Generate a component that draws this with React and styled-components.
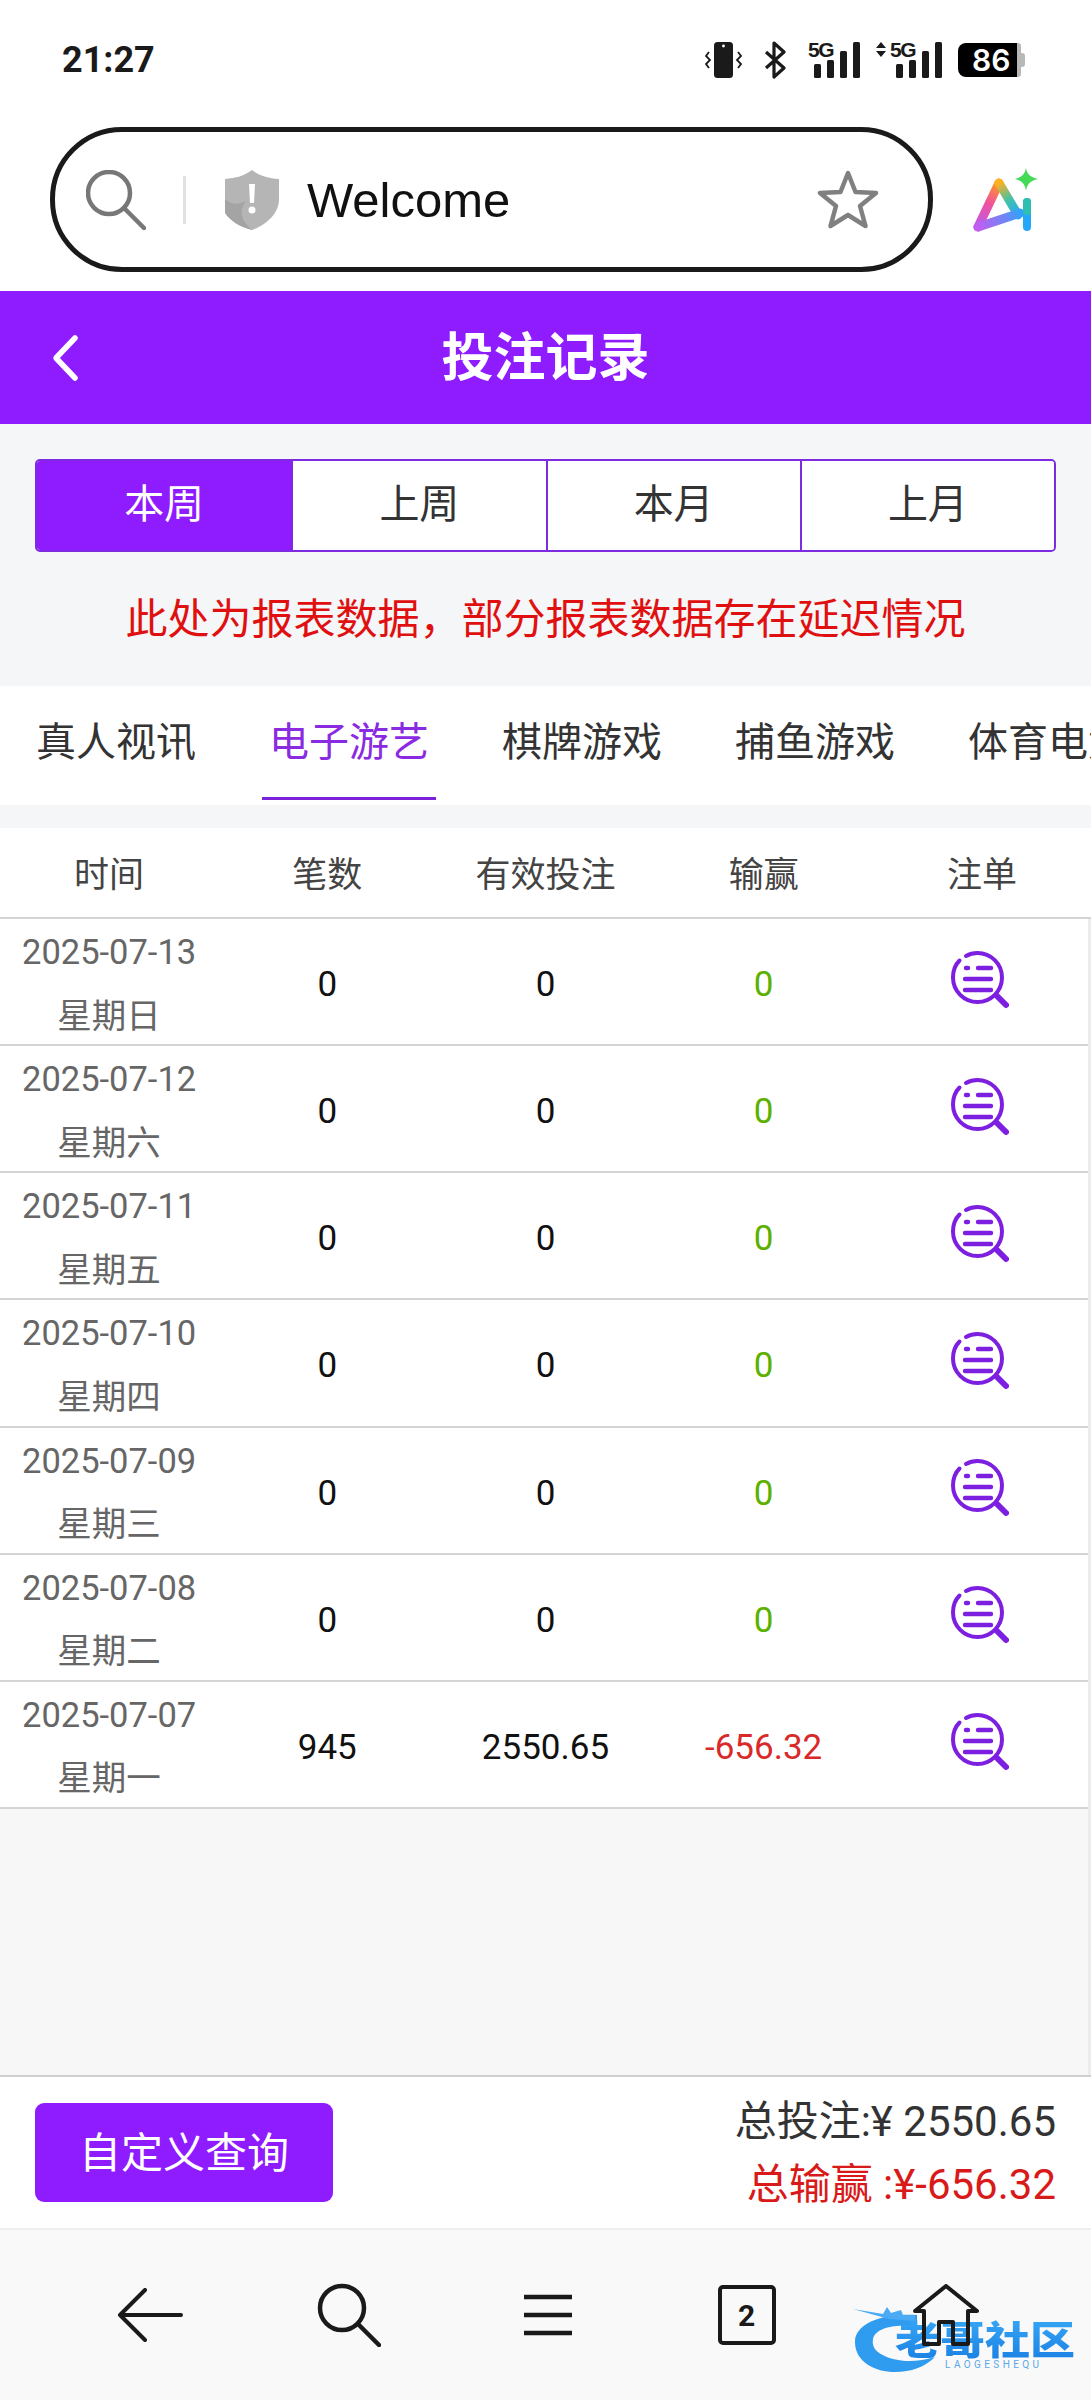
import React from "react";
import styled, { createGlobalStyle } from "styled-components";

const PURPLE = "#8f1bff";
const SANS = `Roboto, "Noto Sans CJK SC", sans-serif`;

const GlobalStyle = createGlobalStyle`
  html, body {
    margin: 0;
    padding: 0;
    background: #fff;
  }
  * {
    box-sizing: border-box;
  }
`;

const rows = [
  { date: "2025-07-13", day: "星期日", count: "0", valid: "0", win: "0" },
  { date: "2025-07-12", day: "星期六", count: "0", valid: "0", win: "0" },
  { date: "2025-07-11", day: "星期五", count: "0", valid: "0", win: "0" },
  { date: "2025-07-10", day: "星期四", count: "0", valid: "0", win: "0" },
  { date: "2025-07-09", day: "星期三", count: "0", valid: "0", win: "0" },
  { date: "2025-07-08", day: "星期二", count: "0", valid: "0", win: "0" },
  { date: "2025-07-07", day: "星期一", count: "945", valid: "2550.65", win: "-656.32" },
];

function SignalBars() {
  return (
    <svg width="52" height="38" viewBox="0 0 52 38">
      <rect x="6" y="23" width="7" height="14" rx="1.5" fill="#1a1a1a" />
      <rect x="19" y="19" width="7" height="18" rx="1.5" fill="#1a1a1a" />
      <rect x="32" y="10" width="7" height="27" rx="1.5" fill="#1a1a1a" />
      <rect x="45" y="1" width="7" height="36" rx="1.5" fill="#1a1a1a" />
    </svg>
  );
}

function StatusIcons() {
  return (
    <StatusGroup>
      <svg width="37" height="38" viewBox="0 0 37 38">
        <rect x="9" y="1" width="19" height="36" rx="3.5" fill="#1a1a1a" />
        <circle cx="18.5" cy="5" r="1.4" fill="#fff" />
        <path d="M4 11 L1 15 L5 19 L1 23 L4 27" fill="none" stroke="#1a1a1a" strokeWidth="1.8" />
        <path d="M33 11 L36 15 L32 19 L36 23 L33 27" fill="none" stroke="#1a1a1a" strokeWidth="1.8" />
      </svg>
      <BluetoothIcon width="22" height="38" viewBox="0 0 22 38">
        <path d="M2 11 L20 27 L10 36 L10 2 L20 11 L2 27" fill="none" stroke="#1a1a1a" strokeWidth="3.2" strokeLinejoin="round" />
      </BluetoothIcon>
      <Signal $gap={22}>
        <SignalLabel>5G</SignalLabel>
        <SignalBars />
      </Signal>
      <DataArrows width="12" height="16" viewBox="0 0 12 16">
        <path d="M6 0 L11 6 L1 6 Z M6 15 L11 9 L1 9 Z" fill="#1a1a1a" />
      </DataArrows>
      <Signal $gap={3}>
        <SignalLabel>5G</SignalLabel>
        <SignalBars />
      </Signal>
      <Battery>
        <BatteryLevel>86</BatteryLevel>
        <BatteryCap />
      </Battery>
    </StatusGroup>
  );
}

function ShieldIcon() {
  return (
    <svg width="56" height="62" viewBox="0 0 56 62">
      <path d="M28 1 C36 7 44 9 55 10 L55 30 C55 45 42 56 28 61 C14 56 1 45 1 30 L1 10 C12 9 20 7 28 1 Z" fill="#b5b5b5" />
      <path d="M1 30 L1 44 C6 52 16 58 28 61 C18 52 14 44 22 32 C14 36 8 36 1 30 Z" fill="#a4a4a4" />
      <path d="M25 15 H31 L30 34 H26 Z" fill="#fff" />
      <circle cx="28" cy="41" r="3.5" fill="#fff" />
    </svg>
  );
}

function AiLogo() {
  return (
    <AiLogoSvg width="66" height="64" viewBox="0 0 66 64">
      <defs>
        <linearGradient id="aiLeft" gradientUnits="userSpaceOnUse" x1="26" y1="15" x2="4" y2="60">
          <stop offset="0" stopColor="#ff9a1f" />
          <stop offset="0.45" stopColor="#f0529c" />
          <stop offset="1" stopColor="#b85cf2" />
        </linearGradient>
        <linearGradient id="aiBase" gradientUnits="userSpaceOnUse" x1="4" y1="60" x2="50" y2="42">
          <stop offset="0" stopColor="#c45cf0" />
          <stop offset="0.6" stopColor="#6f86f5" />
          <stop offset="1" stopColor="#25a8fa" />
        </linearGradient>
        <linearGradient id="aiRight" gradientUnits="userSpaceOnUse" x1="26" y1="15" x2="46" y2="48">
          <stop offset="0" stopColor="#ffb020" />
          <stop offset="0.5" stopColor="#44c2a8" />
          <stop offset="1" stopColor="#25a8fa" />
        </linearGradient>
      </defs>
      <path d="M5 59 L26 15" stroke="url(#aiLeft)" strokeWidth="9" strokeLinecap="round" fill="none" />
      <path d="M26 15 L45 47" stroke="url(#aiRight)" strokeWidth="9" strokeLinecap="round" fill="none" />
      <path d="M5 59 L47 45" stroke="url(#aiBase)" strokeWidth="9" strokeLinecap="round" fill="none" />
      <path d="M54 34 V59" stroke="#25a8fa" strokeWidth="8" strokeLinecap="round" fill="none" />
      <path d="M54 34 V43" stroke="#2fbfb0" strokeWidth="8" strokeLinecap="round" fill="none" />
      <path d="M53 0 C54 6 57 9 65 11 C57 13 54 16 53 23 C52 16 49 13 42 11 C49 9 52 6 53 0 Z" fill="#45d958" />
    </AiLogoSvg>
  );
}

function RecordIcon() {
  return (
    <svg width="58" height="58" viewBox="0 0 58 58" fill="none" stroke="#7d1fe0" strokeLinecap="round">
      <path d="M8.5 9.5 C4.5 13.5 2 19.5 2 26.5 C2 40 13 51 26.5 51 C40 51 51 40 51 26.5 C51 13 40 2 26.5 2 C22 2 18.5 3 15 5" strokeWidth="4" />
      <path d="M46 45 L55 54" strokeWidth="6" />
      <path d="M15 17 H17 M27 17 H40 M14 28 H40 M14 39 H40" strokeWidth="4.4" />
    </svg>
  );
}

function NavIcons() {
  return (
    <BottomNav>
      <NavSlot>
        <svg width="66" height="54" viewBox="0 0 66 54" fill="none" stroke="#1a1a1a" strokeWidth="4" strokeLinecap="round" strokeLinejoin="round">
          <path d="M28 2 L3 27 L28 52 M3 27 H64" />
        </svg>
      </NavSlot>
      <NavSlot>
        <svg width="64" height="64" viewBox="0 0 64 64" fill="none" stroke="#1a1a1a" strokeWidth="4.5" strokeLinecap="round">
          <circle cx="25" cy="25" r="22" />
          <path d="M41 41 L62 62" />
        </svg>
      </NavSlot>
      <NavSlot>
        <svg width="48" height="42" viewBox="0 0 48 42" fill="none" stroke="#1a1a1a" strokeWidth="4.5">
          <path d="M0 3 H48 M0 21 H48 M0 39 H48" />
        </svg>
      </NavSlot>
      <NavSlot>
        <TabCount>2</TabCount>
      </NavSlot>
      <NavSlot>
        <svg width="66" height="62" viewBox="0 0 66 62" fill="none" stroke="#1a1a1a" strokeWidth="4" strokeLinejoin="round" strokeLinecap="round">
          <path d="M2 27 L33 2 L64 27 H55 V60 H40 V38 H26 V60 H11 V27 Z" />
        </svg>
      </NavSlot>
      <Watermark>
        <svg width="90" height="68" viewBox="0 0 90 68">
          <path d="M64 8 C30 6 2 16 2 35 C2 55 22 65 42 65 C58 65 72 60 82 50 C66 55 52 55 40 52 C26 48 18 42 20 32 C22 22 40 16 64 20 Z" fill="#2f9cf0" />
          <path d="M0 2 L30 7 L34 0 L38 6 L48 3 L50 8 L62 8 L62 14 L36 12 Z" fill="#4aaaf4" />
        </svg>
        <WatermarkName>老哥社区</WatermarkName>
        <WatermarkPinyin>LAOGESHEQU</WatermarkPinyin>
      </Watermark>
    </BottomNav>
  );
}

export default function App() {
  return (
    <Page>
      <GlobalStyle />
      <StatusBar>
        <Clock>21:27</Clock>
        <StatusIcons />
      </StatusBar>

      <BrowserBar>
        <AddressBox>
          <svg width="60" height="60" viewBox="0 0 60 60" fill="none" stroke="#777" strokeWidth="4.5" strokeLinecap="round">
            <circle cx="23" cy="23" r="21" />
            <path d="M38 38 L58 58" />
          </svg>
          <AddressDivider />
          <ShieldIcon />
          <AddressText>Welcome</AddressText>
          <StarIcon width="62" height="60" viewBox="0 0 62 60" fill="none" stroke="#808080" strokeWidth="4.5" strokeLinejoin="round">
            <path d="M31 3 L38.5 22 L59 23 L43 36 L48.5 56 L31 45 L13.5 56 L19 36 L3 23 L23.5 22 Z" />
          </StarIcon>
        </AddressBox>
        <AiLogo />
      </BrowserBar>

      <Header>
        <BackChevron>
          <svg width="30" height="48" viewBox="0 0 30 48" fill="none" stroke="#fff" strokeWidth="5.5" strokeLinecap="round" strokeLinejoin="round">
            <path d="M25 4 L6 24 L25 44" />
          </svg>
        </BackChevron>
        投注记录
      </Header>

      <FilterArea>
        <Segments>
          <Segment $active>本周</Segment>
          <Segment>上周</Segment>
          <Segment>本月</Segment>
          <Segment>上月</Segment>
        </Segments>
        <Notice>此处为报表数据，部分报表数据存在延迟情况</Notice>
      </FilterArea>

      <Tabs>
        <Tab>真人视讯</Tab>
        <Tab $active>电子游艺</Tab>
        <Tab>棋牌游戏</Tab>
        <Tab>捕鱼游戏</Tab>
        <Tab>体育电竞</Tab>
      </Tabs>

      <HeadRow>
        <span>时间</span>
        <span>笔数</span>
        <span>有效投注</span>
        <span>输赢</span>
        <span>注单</span>
      </HeadRow>
      <RowsPane>
        {rows.map((row) => (
          <Row key={row.date}>
            <DateCell>
              <div>{row.date}</div>
              <div>{row.day}</div>
            </DateCell>
            <span>{row.count}</span>
            <span>{row.valid}</span>
            <WinCell $loss={row.win !== "0"}>{row.win}</WinCell>
            <IconCell>
              <RecordIcon />
            </IconCell>
          </Row>
        ))}
      </RowsPane>

      <Summary>
        <QueryButton>自定义查询</QueryButton>
        <Totals>
          <TotalLine>总投注:¥ 2550.65</TotalLine>
          <TotalLine $red>总输赢 :¥-656.32</TotalLine>
        </Totals>
      </Summary>

      <NavIcons />
    </Page>
  );
}

const Page = styled.div`
  width: 1091px;
  height: 2400px;
  display: flex;
  flex-direction: column;
  overflow: hidden;
  background: #fff;
  font-family: ${SANS};
`;

const StatusBar = styled.div`
  height: 127px;
  padding: 41px 66px 0 62px;
  display: flex;
  justify-content: space-between;
  align-items: flex-start;
  flex-shrink: 0;
`;

const Clock = styled.div`
  font-size: 36px;
  font-weight: 700;
  line-height: 38px;
  color: #1a1a1a;
`;

const StatusGroup = styled.div`
  display: flex;
  align-items: center;
  height: 38px;
`;

const BluetoothIcon = styled.svg`
  margin-left: 22px;
`;

const DataArrows = styled.svg`
  margin-left: 15px;
  align-self: flex-start;
  margin-top: 1px;
`;

const Signal = styled.div`
  position: relative;
  width: 52px;
  height: 38px;
  margin-left: ${(p) => p.$gap}px;
`;

const SignalLabel = styled.span`
  position: absolute;
  left: 0;
  top: 0;
  font-size: 21px;
  font-weight: 700;
  line-height: 18px;
  letter-spacing: -1.5px;
  color: #1a1a1a;
  font-family: "Liberation Sans", sans-serif;
`;

const Battery = styled.div`
  display: flex;
  align-items: center;
  height: 34px;
  margin-left: 16px;
`;

const BatteryLevel = styled.div`
  width: 63px;
  height: 34px;
  background: linear-gradient(to right, #000 93%, #b8b8b8 93%);
  border-radius: 8px 3px 3px 8px;
  color: #fff;
  font-size: 30px;
  font-weight: 600;
  line-height: 34px;
  padding-left: 14px;
  font-family: "Inter", sans-serif;
`;

const BatteryCap = styled.div`
  width: 4px;
  height: 14px;
  background: #b8b8b8;
  border-radius: 0 3px 3px 0;
`;

const BrowserBar = styled.div`
  height: 164px;
  padding-left: 50px;
  display: flex;
  align-items: flex-start;
  flex-shrink: 0;
`;

const AddressBox = styled.div`
  width: 883px;
  height: 145px;
  border: 5px solid #1a1a1a;
  border-radius: 72px;
  display: flex;
  align-items: center;
  padding-left: 31px;
`;

const AddressDivider = styled.div`
  width: 3px;
  height: 48px;
  background: #e2e2e2;
  margin: 0 38px 0 37px;
`;

const AddressText = styled.div`
  flex: 1;
  margin-left: 27px;
  font-family: "Liberation Sans", sans-serif;
  font-size: 49px;
  color: #111;
`;

const StarIcon = styled.svg`
  margin-right: 49px;
`;

const AiLogoSvg = styled.svg`
  margin: 41px 0 0 40px;
`;

const Header = styled.div`
  position: relative;
  height: 133px;
  padding-bottom: 8px;
  background: ${PURPLE};
  color: #fff;
  font-size: 52px;
  font-weight: 700;
  display: flex;
  align-items: center;
  justify-content: center;
  flex-shrink: 0;
`;

const BackChevron = styled.div`
  position: absolute;
  left: 50px;
  top: 43px;
  display: flex;
`;

const FilterArea = styled.div`
  height: 262px;
  padding: 35px 35px 0;
  background: #f5f6f8;
  flex-shrink: 0;
`;

const Segments = styled.div`
  display: grid;
  grid-template-columns: repeat(4, 1fr);
  height: 93px;
  border: 2px solid #7d2ae0;
  border-radius: 5px;
  overflow: hidden;
  background: #fff;
`;

const Segment = styled.div`
  display: flex;
  align-items: center;
  justify-content: center;
  padding-bottom: 10px;
  font-size: 40px;
  color: ${(p) => (p.$active ? "#fff" : "#333")};
  background: ${(p) => (p.$active ? PURPLE : "#fff")};
  & + & {
    border-left: 2px solid #7d2ae0;
  }
`;

const Notice = styled.div`
  margin-top: 42px;
  text-align: center;
  font-size: 42px;
  line-height: 52px;
  color: #e01010;
`;

const Tabs = styled.div`
  height: 119px;
  background: #fff;
  display: flex;
  overflow: hidden;
  flex-shrink: 0;
  padding-left: 27px;
`;

const Tab = styled.div`
  flex: 0 0 233px;
  height: 119px;
  padding: 32px 9px 0;
  font-size: 40px;
  line-height: 50px;
  white-space: nowrap;
  color: ${(p) => (p.$active ? "#8a2be2" : "#333")};
  position: relative;
  &::after {
    content: "";
    display: ${(p) => (p.$active ? "block" : "none")};
    position: absolute;
    left: 2px;
    right: 57px;
    bottom: 5px;
    height: 3px;
    background: #7b22d8;
  }
`;

const HeadRow = styled.div`
  height: 114px;
  flex-shrink: 0;
  background: #fff;
  border-top: 23px solid #f5f6f8;
  border-bottom: 2px solid #d4d4d4;
  display: grid;
  grid-template-columns: repeat(5, 1fr);
  align-items: center;
  justify-items: center;
  padding-bottom: 3px;
  font-size: 35px;
  color: #444;
`;

const RowsPane = styled.div`
  flex: 1;
  background: #f7f7f7;
  border-right: 3px solid #ececec;
`;

const Row = styled.div`
  height: 127.15px;
  padding-top: 2px;
  background: #fff;
  border-bottom: 2px solid #d4d4d4;
  display: grid;
  grid-template-columns: repeat(5, 218.2px);
  align-items: center;
  justify-items: center;
  font-size: 35px;
  color: #111;
`;

const DateCell = styled.div`
  text-align: center;
  font-size: 34.5px;
  line-height: 63.5px;
  color: #666;
`;

const WinCell = styled.span`
  color: ${(p) => (p.$loss ? "#d92a2a" : "#5cb000")};
`;

const IconCell = styled.div`
  display: flex;
  margin: -10px 3px 0 0;
`;

const Summary = styled.div`
  height: 155px;
  border-top: 2px solid #d0d0d0;
  border-bottom: 2px solid #eee;
  background: #fff;
  padding: 0 35px;
  display: flex;
  align-items: center;
  justify-content: space-between;
  flex-shrink: 0;
`;

const QueryButton = styled.div`
  width: 298px;
  height: 99px;
  padding-bottom: 6px;
  border-radius: 9px;
  background: ${PURPLE};
  color: #fff;
  font-size: 42px;
  display: flex;
  align-items: center;
  justify-content: center;
`;

const Totals = styled.div`
  text-align: right;
`;

const TotalLine = styled.div`
  font-size: 42px;
  line-height: 63px;
  color: ${(p) => (p.$red ? "#d91a1a" : "#333")};
`;

const BottomNav = styled.div`
  position: relative;
  height: 170px;
  background: #f9f9f9;
  display: grid;
  grid-template-columns: repeat(5, 199px);
  padding-left: 50px;
  flex-shrink: 0;
`;

const NavSlot = styled.div`
  position: relative;
  z-index: 1;
  display: flex;
  align-items: center;
  justify-content: center;
`;

const TabCount = styled.div`
  width: 58px;
  height: 60px;
  border: 4px solid #1a1a1a;
  border-radius: 5px;
  display: flex;
  align-items: center;
  justify-content: center;
  font-size: 30px;
  font-weight: 700;
  color: #1a1a1a;
`;

const Watermark = styled.div`
  position: absolute;
  left: 853px;
  top: 77px;
  width: 220px;
  height: 68px;
`;

const WatermarkName = styled.div`
  position: absolute;
  left: 42px;
  top: 9px;
  font-size: 45px;
  line-height: 50px;
  font-weight: 900;
  white-space: nowrap;
  transform: scaleY(0.85);
  background: linear-gradient(to bottom, #35a4f5, #1a80e2);
  -webkit-background-clip: text;
  background-clip: text;
  color: transparent;
`;

const WatermarkPinyin = styled.div`
  position: absolute;
  left: 92px;
  top: 52px;
  font-size: 10px;
  letter-spacing: 3.4px;
  line-height: 12px;
  white-space: nowrap;
  color: #5aa8e8;
`;
